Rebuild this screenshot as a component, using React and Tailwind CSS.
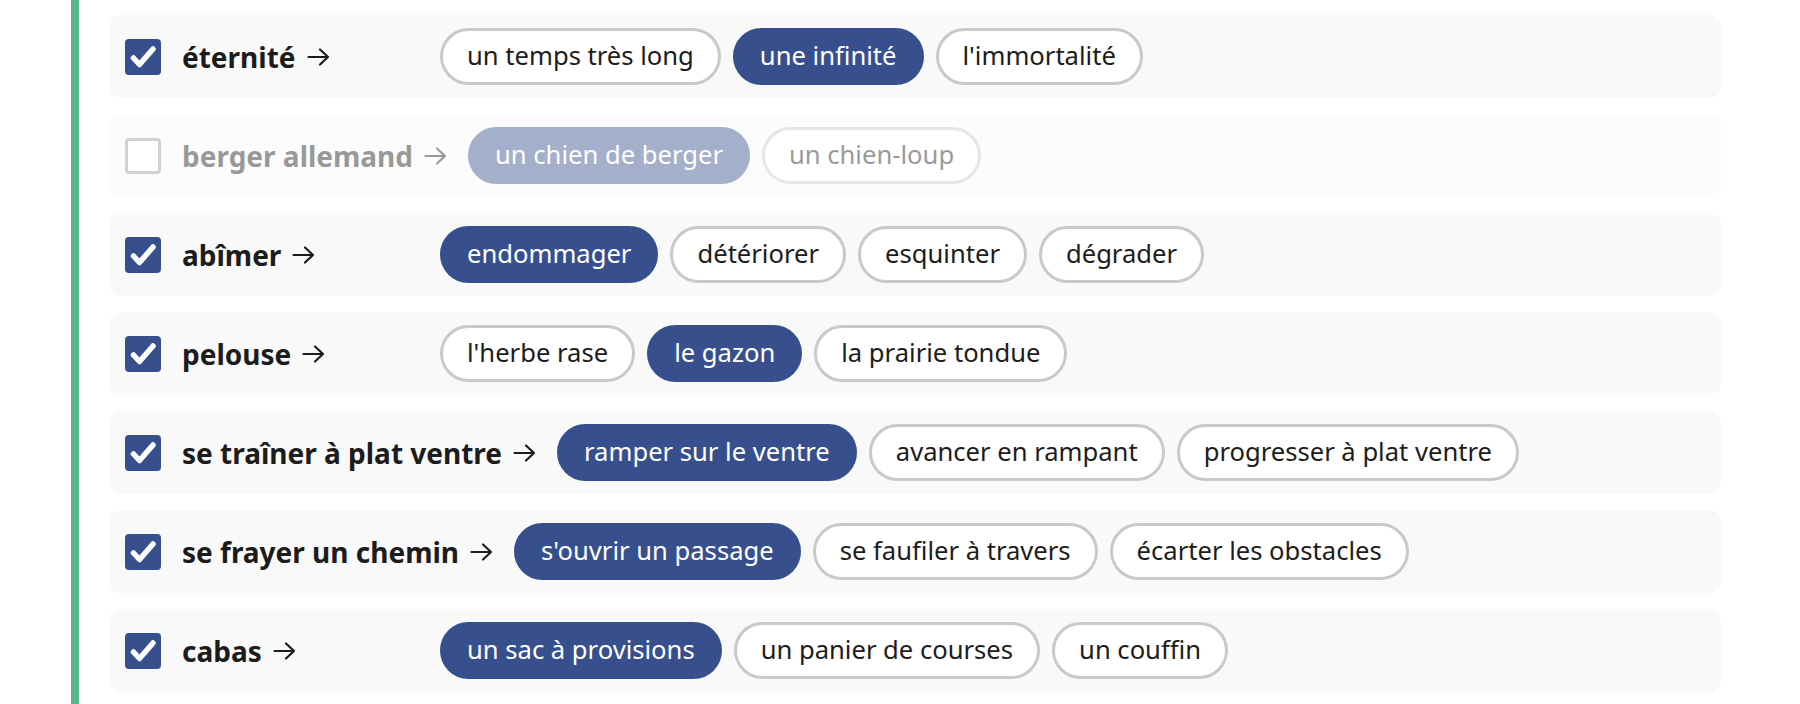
import React, { useState } from 'react';

const initialRows = [
  { word: 'éternité', checked: true, options: ['un temps très long', 'une infinité', "l'immortalité"], picked: 1 },
  { word: 'berger allemand', checked: false, options: ['un chien de berger', 'un chien-loup'], picked: 0 },
  { word: 'abîmer', checked: true, options: ['endommager', 'détériorer', 'esquinter', 'dégrader'], picked: 0 },
  { word: 'pelouse', checked: true, options: ["l'herbe rase", 'le gazon', 'la prairie tondue'], picked: 1 },
  { word: 'se traîner à plat ventre', checked: true, options: ['ramper sur le ventre', 'avancer en rampant', 'progresser à plat ventre'], picked: 0 },
  { word: 'se frayer un chemin', checked: true, options: ["s'ouvrir un passage", 'se faufiler à travers', 'écarter les obstacles'], picked: 0 },
  { word: 'cabas', checked: true, options: ['un sac à provisions', 'un panier de courses', 'un couffin'], picked: 0 },
];

const CheckBox = ({ checked, onClick }) => (
  <button
    onClick={onClick}
    className={
      checked
        ? 'w-[36px] h-[36px] shrink-0 rounded-[4px] bg-[#37508d] flex items-center justify-center'
        : 'w-[36px] h-[36px] shrink-0 rounded-[4px] border-[3px] border-[#9a9a9a] bg-white'
    }
  >
    {checked && (
      <svg width="36" height="36" viewBox="0 0 36 36">
        <path d="M8.5 19 L14.5 25.5 L28 10" fill="none" stroke="white" strokeWidth="5.5" strokeLinecap="round" strokeLinejoin="round" />
      </svg>
    )}
  </button>
);

const Arrow = () => (
  <svg width="23" height="20" viewBox="0 0 23 20" className="ml-[11px] shrink-0">
    <path d="M1.5 10 H21 M13 2.5 L21 10 L13 17.5" fill="none" stroke="currentColor" strokeWidth="2.2" strokeLinecap="round" strokeLinejoin="round" />
  </svg>
);

const Row = ({ row, onToggle, onPick }) => (
  <div
    className={
      'flex items-center rounded-[12px] bg-[#f9f9f9] pl-[16px] pr-[16px] py-[13px] ' +
      (row.checked ? '' : 'opacity-45')
    }
  >
    <CheckBox checked={row.checked} onClick={onToggle} />
    <div className="ml-[21px] min-w-[237px] mr-[21px] flex items-center whitespace-nowrap text-[28px] font-bold text-[#1c1c1c]">
      <span>{row.word}</span>
      <Arrow />
    </div>
    <div className="flex items-center gap-[12px]">
      {row.options.map((opt, i) => (
        <button
          key={opt}
          onClick={() => onPick(i)}
          className={
            i === row.picked
              ? 'h-[57px] rounded-full border-[3px] border-[#37508d] bg-[#37508d] px-[24px] text-[25.6px] text-white whitespace-nowrap'
              : 'h-[57px] rounded-full border-[3px] border-[#c9c9c9] bg-white px-[24px] text-[25.6px] text-[#1c1c1c] whitespace-nowrap'
          }
        >
          {opt}
        </button>
      ))}
    </div>
  </div>
);

export default function App() {
  const [rows, setRows] = useState(initialRows);

  const toggle = (idx) =>
    setRows(rows.map((r, i) => (i === idx ? { ...r, checked: !r.checked } : r)));
  const pick = (idx, opt) =>
    setRows(rows.map((r, i) => (i === idx ? { ...r, picked: opt } : r)));

  return (
    <div className="min-h-[704px] bg-white font-['Noto_Sans',sans-serif]">
      <div className="ml-[71px] min-h-[704px] border-l-[8px] border-[#55b887] pl-[30px] pr-[79px] pt-[15px] flex flex-col gap-[16px]">
        {rows.map((row, i) => (
          <Row key={row.word} row={row} onToggle={() => toggle(i)} onPick={(o) => pick(i, o)} />
        ))}
      </div>
    </div>
  );
}
